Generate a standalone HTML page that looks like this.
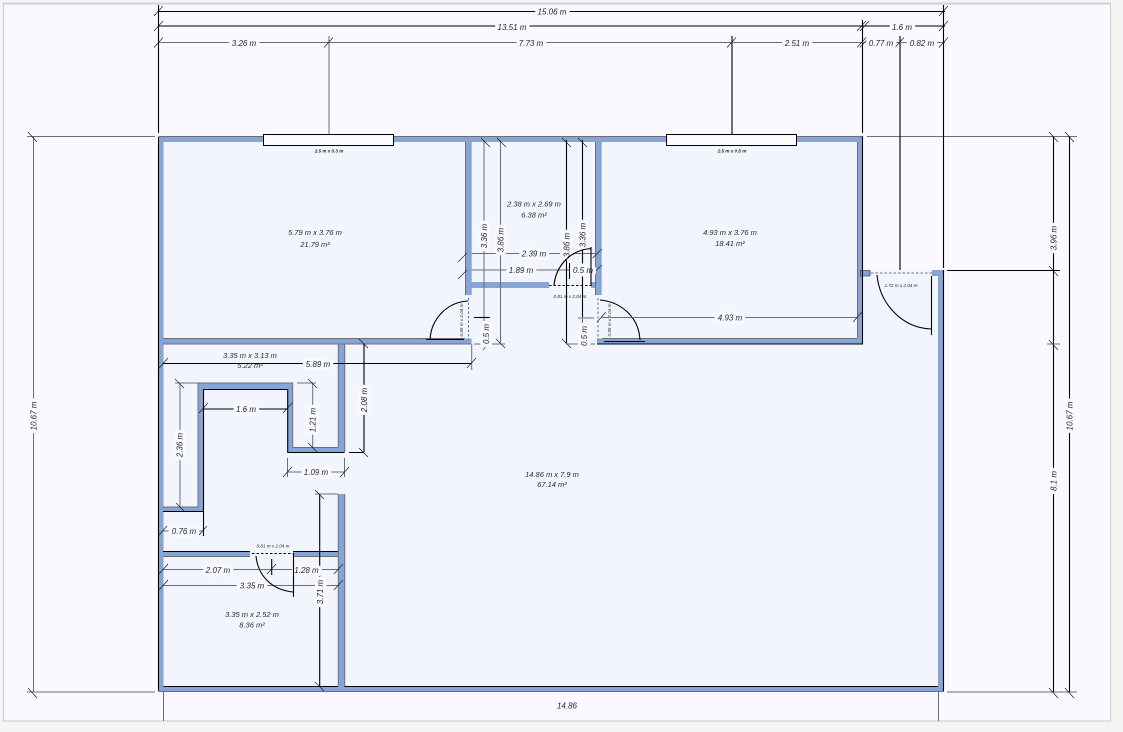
<!DOCTYPE html>
<html>
<head>
<meta charset="utf-8">
<style>
html,body{margin:0;padding:0;background:#f5f5f5;width:1123px;height:732px;overflow:hidden}
svg{display:block;filter:blur(.3px)}
text{font-family:"Liberation Sans",sans-serif;font-style:italic;text-anchor:middle;fill:#2a2a2a}
.d{font-size:8px;paint-order:stroke;stroke:#f8f8ff;stroke-width:7px;stroke-linejoin:round}
.r{font-size:7.500px}
.s{font-size:4.600px;font-weight:bold}
.t{font-size:4.600px}
.k{stroke:#000;stroke-width:1.100;fill:none}
.g{stroke:#6e6e72;stroke-width:1;fill:none}
.f{stroke:#111;stroke-width:.6;fill:none}
.w{fill:#86a5d6}
</style>
</head>
<body>
<svg width="1123" height="732" viewBox="0 0 1123 732" xmlns="http://www.w3.org/2000/svg">
<!-- frame -->
<rect x="3.500" y="4" width="1107" height="717" fill="#f9f9ff" stroke="#cfcfd2" stroke-width="1.200"/>
<rect x="3" y="2.500" width="1108" height="2" fill="#d2d2d2"/>
<!-- room fill -->
<polygon points="159,137 862,137 862,270 943,270 943,691 159,691" fill="#f3f5fe"/>

<!-- extension lines -->
<path class="g" d="M163.500 691V721M938.500 691V721"/>
<path class="g" d="M27 136.500H155M867 136.500H1077M27 692H155M947 692H1077"/>
<path class="g" d="M33.500 136.500V692"/>
<path class="f" d="M28 132l9 10M28 688l9 10M1049 132l9 10M1065 132l9 10M1049 688l9 10M1065 688l9 10"/>
<path class="k" d="M158.500 5V133M862.500 20V133M900 36V270M943.500 5V268M732 36V135"/>
<path class="g" d="M329 36V135"/>
<path class="k" d="M1053.500 136.500V692M1069.500 136.500V692M947 270.500H1060"/>
<path class="g" d="M1047 344H1060"/>
<path class="f" d="M1049 266l9 10M1049 340l9 10"/>

<!-- walls -->
<g class="w">
<rect x="158.500" y="136.500" width="704" height="5.500"/>
<rect x="158.500" y="136.500" width="5" height="555"/>
<rect x="158.500" y="686" width="785" height="5.500"/>
<rect x="857" y="136.500" width="5.500" height="207.500"/>
<rect x="938" y="270" width="5.500" height="421.500"/>
<rect x="932" y="270" width="11.500" height="6"/>
<rect x="860.500" y="270.500" width="9.500" height="5.500"/>
<rect x="163" y="338.500" width="308.500" height="5.500"/>
<rect x="597" y="338.500" width="265" height="5.500"/>
<rect x="465.300" y="142" width="6.400" height="153"/>
<rect x="595.300" y="142" width="6.400" height="153"/>
<rect x="471" y="282" width="78" height="6"/>
<rect x="591" y="282" width="5" height="6"/>
<rect x="338.300" y="344" width="6.400" height="108.500"/>
<rect x="287.700" y="447.500" width="57" height="5"/>
<rect x="287.700" y="383" width="5" height="69.500"/>
<rect x="198" y="383" width="94.700" height="6.500"/>
<rect x="198" y="383" width="5.500" height="128.700"/>
<rect x="163" y="507.300" width="40.500" height="4.400"/>
<rect x="338.300" y="494" width="6.400" height="192"/>
<rect x="163" y="551.300" width="87" height="5.400"/>
<rect x="293" y="551.300" width="45.300" height="5.400"/>
</g>
<!-- wall outlines -->
<path class="k" d="M158.500 137V691M163.500 686.500H338M344.500 686.500H938M943.500 270V691.500M862.500 136V344H597"/>
<path class="g" d="M158.500 136.500H862.500M158.500 691.500H943.500M163 338.500H465M163 344H471M601.700 338.500H857M857.500 142V338"/>
<path class="g" d="M465.500 142V295M595.500 142V295"/>
<path class="f" d="M860.500 270.500H870V276H860.500Z"/>
<path class="k" d="M163 511.500H203.500V389.500H287.700V452.500H344.500"/>
<path class="g" d="M198 383H292.700V447.500H338.300M198 383V507M163 507H198"/>
<path class="k" d="M163 551.500H250M293 551.500H338"/>
<path class="g" d="M163 556.500H250M293 556.500H338M338.300 344V447M338.300 494V686M344.700 494V686M344.700 344V452"/>

<!-- windows -->
<rect x="263.500" y="134.500" width="130" height="11" fill="#fbfbff" stroke="#000" stroke-width="1"/>
<rect x="666.500" y="134.500" width="130" height="11" fill="#fbfbff" stroke="#000" stroke-width="1"/>
<text class="s" x="329" y="152.500">2.5 m x 0.3 m</text>
<text class="s" x="732" y="152.500">2.5 m x 0.5 m</text>

<!-- top dimension lines -->
<path class="k" d="M158 11.500H945M158 26H945"/>
<path class="g" d="M158 42.500H945"/>
<path class="f" d="M154 16l9-10M154 31l9-10M154 47.500l9-10M324 47.500l9-10M727 47.500l9-10M857 31l9-10M860 31l9-10M857 47.500l9-10M860 47.500l9-10M895 47.500l9-10M939 16l9-10M939 31l9-10M939 47.500l9-10"/>
<text class="d" x="552" y="14.500">15.06 m</text>
<text class="d" x="512" y="30">13.51 m</text>
<text class="d" x="902" y="30">1.6 m</text>
<text class="d" x="244" y="46">3.26 m</text>
<text class="d" x="531" y="46">7.73 m</text>
<text class="d" x="797" y="46">2.51 m</text>
<text class="d" x="881" y="46">0.77 m</text>
<text class="d" x="922" y="46">0.82 m</text>

<!-- central dimensions -->
<path class="g" d="M484 140V344M500.500 140V344M471.700 253.500H595.300M471.700 270H595.300"/>
<path class="k" d="M566.500 140V344M582.500 140V317"/>
<path class="g" d="M582.500 317V344"/>
<path class="k" d="M474 317.500H490"/>
<path class="g" d="M578 318H594"/>
<path class="f" d="M481 138l9 9M497 138l9 9M562 138l9 9M578 138l9 9M467 253l-9 9M467 270l-9 9M601.700 249l-9 9M601.700 265l-9 9M487 345l-4 5M496 339l9 9M562 339l9 9M578 340l9 9"/>
<path class="g" d="M474 344H505M566 344H595"/>
<path class="k" d="M569.500 263V279"/>
<text class="d" transform="translate(487,236) rotate(-90)">3.36 m</text>
<text class="d" transform="translate(503.500,240) rotate(-90)">3.86 m</text>
<text class="d" transform="translate(569.500,245) rotate(-90)">3.86 m</text>
<text class="d" transform="translate(585.500,235) rotate(-90)">3.36 m</text>
<text class="d" transform="translate(489,334) rotate(-90)">0.5 m</text>
<text class="d" transform="translate(587,336) rotate(-90)">0.5 m</text>
<text class="d" x="534" y="256.500">2.39 m</text>
<text class="d" x="521" y="273">1.89 m</text>
<text class="d" x="583" y="273">0.5 m</text>

<!-- doors central -->
<path class="k" stroke-dasharray="2.500 2" d="M549 285.500H591"/>
<path class="k" d="M554 285C556 266 570 250 591 248.500M591 247V286"/>
<text class="t" x="570" y="298">0.81 m x 2.04 m</text>
<path class="g" stroke-dasharray="2.500 2" d="M468.500 298V340M598 298V340"/>
<path class="k" d="M430 340C431 318 448 302 468 301M426 339.500H464"/>
<path class="k" d="M600 300C622 302 639 318 640 340M604 341.500H645"/>
<text class="t" transform="translate(463,320) rotate(-90)">0.85 m x 2.04 m</text>
<text class="t" transform="translate(611,320) rotate(-90)">0.85 m x 2.04 m</text>
<path class="g" d="M601.700 317.500H857"/>
<path class="f" d="M597 322l9-10M853 322l9-10"/>
<text class="d" x="730" y="320.500">4.93 m</text>

<!-- exterior door -->
<path class="g" stroke-dasharray="2.500 2" d="M871 273H932"/>
<path class="k" d="M877 275C880 305 903 328 931 329M931.500 276V335"/>
<text class="t" x="901" y="287">1.72 m x 2.04 m</text>

<!-- left-hand interior dimensions -->
<path class="k" d="M163 363.500H471.700M364 344V452M349 452.500H364M203.500 409H287.700M203.500 511V536M319.700 494V686"/>
<path class="g" d="M471.700 344V370M175 383H198M180 383V507M297 383H316M312.700 383V447M287.500 458V477M344.500 458V477M287.500 472H344.500M315 494H338M163 531H170M199 531H203.500M163 569.500H338M163 585.500H338"/>
<path class="f" d="M159 368l9-10M467 368l9-10M359 339l9 9M359 448l9 9M175 379l9 9M176 503l9 9M308 379l9 9M308 443l9 9M199 413l9-10M283 413l9-10M283 477l9-10M340 477l9-10M315 490l9 9M315 682l9 9M159 535l8-9M199 535l8-9M159 574l9-10M159 590l9-10M334 574l9-10M334 590l9-10M267 574l9-10"/>
<path class="k" d="M271.700 559V575"/>
<text class="r" x="250" y="358">3.35 m x 3.13 m</text>
<text class="r" x="250" y="368">5.22 m²</text>
<text class="d" x="318" y="367">5.89 m</text>
<text class="d" transform="translate(367,400) rotate(-90)">2.08 m</text>
<text class="d" transform="translate(182.500,445) rotate(-90)">2.36 m</text>
<text class="d" x="246" y="412">1.6 m</text>
<text class="d" transform="translate(315.500,420) rotate(-90)">1.21 m</text>
<text class="d" x="316" y="475">1.09 m</text>
<text class="d" x="184" y="534">0.76 m</text>
<text class="d" x="218" y="573">2.07 m</text>
<text class="d" x="306.500" y="573">1.28 m</text>
<text class="d" x="252" y="588.500">3.35 m</text>
<text class="d" transform="translate(323,592) rotate(-90)">3.71 m</text>

<!-- lower door -->
<path class="k" stroke-dasharray="2.500 2" d="M252 553.500H293"/>
<path class="k" d="M256 556C258 576 272 590 293 592M293.500 553V597"/>
<text class="t" x="273" y="547.500">0.81 m x 2.04 m</text>

<!-- outer dim labels -->
<text class="d" transform="translate(36.500,416) rotate(-90)">10.67 m</text>
<text class="d" transform="translate(1056.500,238) rotate(-90)">3.96 m</text>
<text class="d" transform="translate(1056.500,481) rotate(-90)">8.1 m</text>
<text class="d" transform="translate(1072.500,416) rotate(-90)">10.67 m</text>
<text class="r" x="567" y="708.500" style="font-size:8px">14.86</text>

<!-- room labels -->
<text class="r" x="315" y="235">5.79 m x 3.76 m</text>
<text class="r" x="315" y="247">21.79 m²</text>
<text class="r" x="534" y="206.500">2.38 m x 2.69 m</text>
<text class="r" x="534" y="217.500">6.38 m²</text>
<text class="r" x="730" y="235">4.93 m x 3.76 m</text>
<text class="r" x="730" y="246">18.41 m²</text>
<text class="r" x="552" y="477">14.86 m x 7.9 m</text>
<text class="r" x="552" y="487">67.14 m²</text>
<text class="r" x="252" y="617">3.35 m x 2.52 m</text>
<text class="r" x="252" y="627.500">8.36 m²</text>
</svg>
</body>
</html>
